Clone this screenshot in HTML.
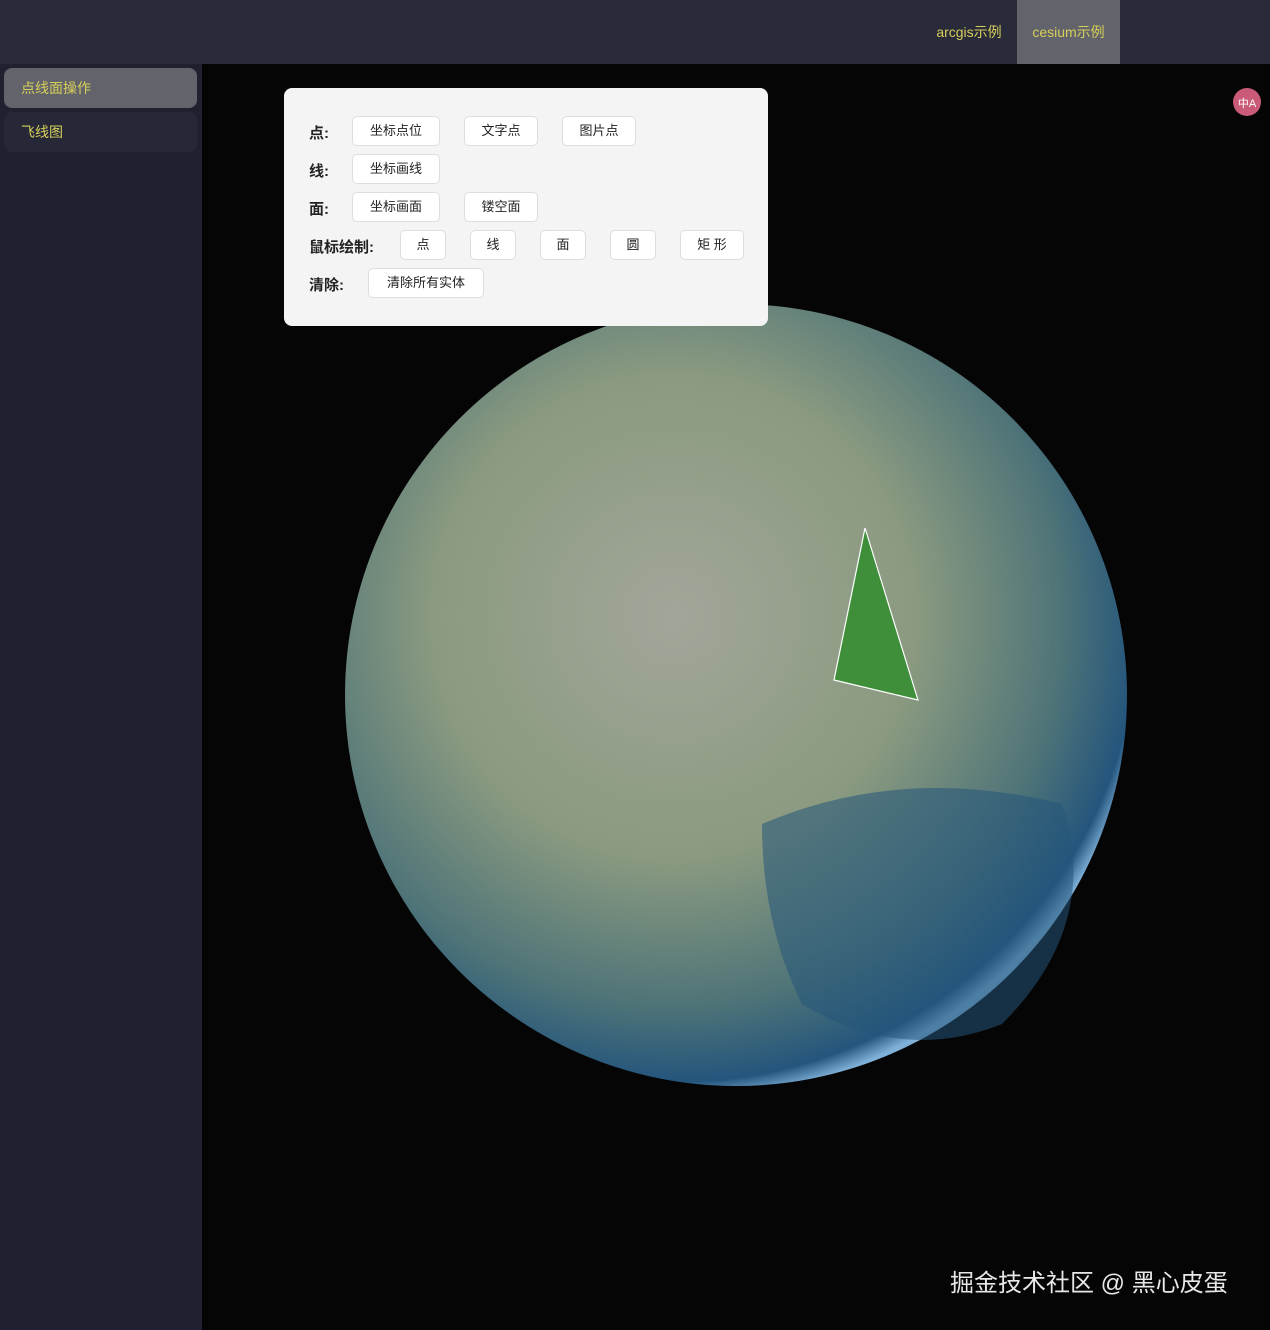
<!DOCTYPE html><html><head><meta charset="utf-8"><style>
*{margin:0;padding:0;box-sizing:border-box}
body{width:1270px;height:1330px;background:#1e1f2d;font-family:"Liberation Sans","Noto Sans CJK SC",sans-serif;position:relative;overflow:hidden}
.top{position:absolute;left:0;top:0;width:1270px;height:64px;background:#292b3a}
.tab{position:absolute;top:0;height:64px;line-height:64px;color:#d6cf5a;font-size:14px;text-align:center}
.side{position:absolute;left:0;top:64px;width:202px;height:1266px;background:#1f2030}
.mi{position:absolute;left:4px;width:193px;height:40px;border-radius:8px;color:#d6cf5a;font-size:14px;line-height:40px;padding-left:17px}
.map{position:absolute;left:202px;top:64px;width:1068px;height:1266px;background:#050506;overflow:hidden}
.panel{position:absolute;left:284px;top:88px;width:484px;height:238px;background:#f4f4f4;border-radius:8px}
.lb{position:absolute;left:25px;font-size:15px;font-weight:bold;color:#222}
.b{position:absolute;height:30px;background:#fff;border:1px solid #ddd;border-radius:5px;font-size:13px;color:#222;text-align:center;line-height:28px}
</style></head><body>
<div class="top"></div>
<div class="tab" style="left:930px;width:78px">arcgis示例</div>
<div class="tab" style="left:1017px;width:103px;background:#62636b">cesium示例</div>
<div class="side"></div>
<div class="mi" style="top:68px;background:#62636b">点线面操作</div>
<div class="mi" style="top:112px;background:#262838">飞线图</div>
<div class="map">
<svg width="1068" height="1266" style="position:absolute;left:0;top:0">
<defs>
<radialGradient id="g" cx="0.42" cy="0.4" r="0.62">
<stop offset="0" stop-color="#a2a699"/><stop offset="0.5" stop-color="#8a9a80"/><stop offset="0.8" stop-color="#4f7478"/><stop offset="0.96" stop-color="#24557c"/><stop offset="1" stop-color="#7fb0d8"/>
</radialGradient>
</defs>
<circle cx="534" cy="631" r="391" fill="url(#g)"/>
<path d="M560 760 Q700 700 860 740 Q900 860 800 960 Q700 1000 600 940 Q560 860 560 760Z" fill="#24557a" opacity="0.55"/>
<path d="M663 464 L632 616 L716 636 Z" fill="#3f8f3a" stroke="#fff" stroke-width="1.2"/>
<circle cx="1045" cy="38" r="14" fill="#c95b78"/>
<text x="1045" y="43" font-size="11" fill="#fff" text-anchor="middle">中A</text>
<text x="748" y="1227" font-size="24" fill="#e8e8e8">掘金技术社区 @ 黑心皮蛋</text>
</svg>
</div>
<div class="panel">
<div class="lb" style="top:34px">点:</div>
<div class="lb" style="top:72px">线:</div>
<div class="lb" style="top:110px">面:</div>
<div class="lb" style="top:148px">鼠标绘制:</div>
<div class="lb" style="top:186px">清除:</div>
</div>
<div class="b" style="left:352px;top:116px;width:88px">坐标点位</div>
<div class="b" style="left:464px;top:116px;width:74px">文字点</div>
<div class="b" style="left:562px;top:116px;width:74px">图片点</div>
<div class="b" style="left:352px;top:154px;width:88px">坐标画线</div>
<div class="b" style="left:352px;top:192px;width:88px">坐标画面</div>
<div class="b" style="left:464px;top:192px;width:74px">镂空面</div>
<div class="b" style="left:400px;top:230px;width:46px">点</div>
<div class="b" style="left:470px;top:230px;width:46px">线</div>
<div class="b" style="left:540px;top:230px;width:46px">面</div>
<div class="b" style="left:610px;top:230px;width:46px">圆</div>
<div class="b" style="left:680px;top:230px;width:64px">矩 形</div>
<div class="b" style="left:368px;top:268px;width:116px">清除所有实体</div>
</body></html>
